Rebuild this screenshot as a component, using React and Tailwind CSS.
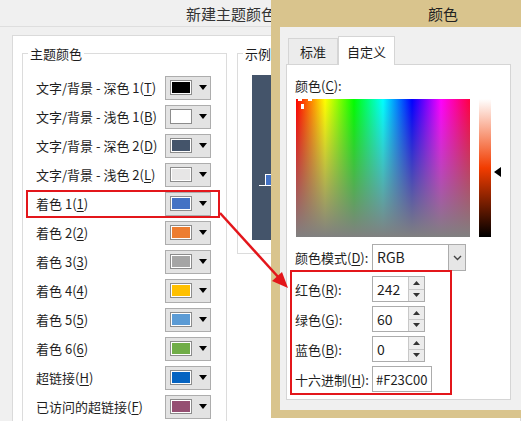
import React from 'react';

const themeRows = [
  { label: '文字/背景 - 深色 1(', key: 'T', color: '#000000' },
  { label: '文字/背景 - 浅色 1(', key: 'B', color: '#ffffff' },
  { label: '文字/背景 - 深色 2(', key: 'D', color: '#44546a' },
  { label: '文字/背景 - 浅色 2(', key: 'L', color: '#e7e6e6' },
  { label: '着色 1(', key: '1', color: '#4472c4' },
  { label: '着色 2(', key: '2', color: '#ed7d31' },
  { label: '着色 3(', key: '3', color: '#a5a5a5' },
  { label: '着色 4(', key: '4', color: '#ffc000' },
  { label: '着色 5(', key: '5', color: '#5b9bd5' },
  { label: '着色 6(', key: '6', color: '#70ad47' },
  { label: '超链接(', key: 'H', color: '#0563c1' },
  { label: '已访问的超链接(', key: 'F', color: '#954f72' },
];

const Accel = ({ text, k, tail = ')' }) => (
  <span>
    {text}
    <span className="underline underline-offset-2">{k}</span>
    {tail}
  </span>
);

const ColorButton = ({ color }) => (
  <div className="flex h-[24px] w-[46px] shrink-0 items-center border border-[#adadad] bg-[#e3e3e3]">
    <div className="ml-[4px] border border-[#8c8c8c] bg-white p-px">
      <div className="h-[11px] w-[18px]" style={{ backgroundColor: color }} />
    </div>
    <svg className="ml-[7px]" width="8" height="5" viewBox="0 0 8 5">
      <path d="M0 0h8L4 5z" fill="#000" />
    </svg>
  </div>
);

const Spinner = () => (
  <div className="flex h-full w-[16px] flex-col border-l border-[#c8c8c8]">
    <div className="flex flex-1 items-center justify-center border-b border-[#c8c8c8] bg-[#ececec]">
      <svg width="7" height="4" viewBox="0 0 7 4">
        <path d="M0 4h7L3.5 0z" fill="#333" />
      </svg>
    </div>
    <div className="flex flex-1 items-center justify-center bg-[#ececec]">
      <svg width="7" height="4" viewBox="0 0 7 4">
        <path d="M0 0h7L3.5 4z" fill="#333" />
      </svg>
    </div>
  </div>
);

const NumField = ({ label, k, value }) => (
  <div className="flex h-[26px] items-center">
    <div className="w-[77px]">
      <Accel text={label} k={k} tail="):" />
    </div>
    <div className="flex h-[26px] w-[53px] items-center border border-[#acacac] bg-white">
      <span className="flex-1 pl-[4px] text-[14px]">{value}</span>
      <Spinner />
    </div>
  </div>
);

export default function App() {
  return (
    <div className="relative h-[421px] w-[521px] overflow-hidden bg-[#f0f0f0] font-['Noto_Sans_CJK_SC',sans-serif] text-[13px] leading-[15px] text-[#1e1e1e]">
      {/* 新建主题颜色 对话框 */}
      <div className="flex h-full flex-col overflow-hidden">
        <div className="flex h-[27px] shrink-0 items-center border-b border-[#dedede] pl-[186px] text-[15px] text-[#333]">
          新建主题颜色
        </div>
        <div className="shrink-0 pl-[12px] pt-[8px]">
          <div className="flex h-[400px] gap-[10px] border border-[#dadada] bg-white pl-[9px] pt-[17px]">
            {/* 主题颜色 */}
            <div className="relative h-[380px] w-[205px] shrink-0 border border-[#dcdcdc] pt-[19px]">
              <span className="absolute -top-[8px] left-[5px] bg-white px-[2px]">主题颜色</span>
              {themeRows.map((r) => (
                <div key={r.key} className="flex h-[29px] items-center pl-[13px] pr-[15px]">
                  <div className="flex-1">
                    <Accel text={r.label} k={r.key} />
                  </div>
                  <ColorButton color={r.color} />
                </div>
              ))}
            </div>
            {/* 示例 */}
            <div className="relative h-[201px] w-[200px] shrink-0 border border-[#dcdcdc] pl-[14px] pt-[21px]">
              <span className="absolute -top-[8px] left-[5px] bg-white px-[2px]">示例</span>
              <div className="relative h-[165px] bg-[#44546a]">
                <svg className="absolute left-[7px] top-[98px]" width="20" height="14" viewBox="0 0 20 14">
                  <path d="M0 12.5h6" stroke="#fff" strokeWidth="1" />
                  <rect x="6.5" y="1.5" width="10" height="11" fill="#4472c4" stroke="#fff" strokeWidth="1" />
                </svg>
              </div>
            </div>
          </div>
        </div>
      </div>

      {/* 颜色 对话框 */}
      <div className="absolute left-[271px] top-0 flex h-[418px] w-[260px] flex-col bg-[#d9c48d]">
        <div className="flex h-[27px] shrink-0 items-center pl-[157px] text-[15px] text-[#222]">颜色</div>
        <div className="mb-[8px] ml-[9px] flex-1 bg-[#f0f0f0] px-[6px] pt-[9px]">
          <div className="flex h-[28px] items-end pl-[2px]">
            <div className="flex h-[26px] w-[50px] items-center justify-center border border-b-0 border-[#d5d5d5] bg-[#ececec]">
              标准
            </div>
            <div className="relative z-10 -mb-px flex h-[29px] w-[57px] items-center justify-center border border-b-0 border-[#d5d5d5] bg-white">
              自定义
            </div>
          </div>
          <div className="h-[336px] w-[225px] border border-[#d5d5d5] bg-white pl-[8px] pt-[13px]">
            <div>
              <Accel text="颜色(" k="C" tail="):" />
            </div>
            <div className="mt-[6px] flex">
              <svg className="ml-px" width="174" height="138" viewBox="0 0 174 138">
                <defs>
                  <linearGradient id="hue" x1="0" y1="0" x2="1" y2="0">
                    <stop offset="0" stopColor="#ff0000" />
                    <stop offset="0.167" stopColor="#ffff00" />
                    <stop offset="0.333" stopColor="#00ff00" />
                    <stop offset="0.5" stopColor="#00ffff" />
                    <stop offset="0.667" stopColor="#0000ff" />
                    <stop offset="0.833" stopColor="#ff00ff" />
                    <stop offset="1" stopColor="#ff0040" />
                  </linearGradient>
                  <linearGradient id="sat" x1="0" y1="0" x2="0" y2="1">
                    <stop offset="0" stopColor="#808080" stopOpacity="0" />
                    <stop offset="1" stopColor="#808080" stopOpacity="1" />
                  </linearGradient>
                </defs>
                <rect width="174" height="138" fill="url(#hue)" />
                <rect width="174" height="138" fill="url(#sat)" />
                <rect x="2" y="0" width="4" height="2" fill="#fff" />
                <rect x="12" y="0" width="4" height="2" fill="#fff" />
                <rect x="5" y="5" width="3" height="5" fill="#fff" />
              </svg>
              <svg className="ml-[9px]" width="12" height="138" viewBox="0 0 12 138">
                <defs>
                  <linearGradient id="lum" x1="0" y1="0" x2="0" y2="1">
                    <stop offset="0" stopColor="#ffffff" />
                    <stop offset="0.5" stopColor="#f23c00" />
                    <stop offset="1" stopColor="#000000" />
                  </linearGradient>
                </defs>
                <rect width="12" height="138" fill="url(#lum)" />
              </svg>
              <svg className="ml-[3px] mt-[68px]" width="7" height="10" viewBox="0 0 7 10">
                <path d="M7 0v10L0 5z" fill="#000" />
              </svg>
            </div>
            <div className="mt-[7px] flex items-center">
              <div className="w-[77px]">
                <Accel text="颜色模式(" k="D" tail="):" />
              </div>
              <div className="flex h-[27px] w-[94px] border border-[#acacac] bg-white">
                <span className="flex flex-1 items-center pl-[4px] text-[14px]">RGB</span>
                <div className="flex w-[17px] items-center justify-center border-l border-[#acacac] bg-[#e6e6e6]">
                  <svg width="9" height="6" viewBox="0 0 9 6">
                    <path d="M1 1l3.5 3.5L8 1" stroke="#444" strokeWidth="1.4" fill="none" />
                  </svg>
                </div>
              </div>
            </div>
            <div className="mt-[5px] flex flex-col gap-[4px]">
              <NumField label="红色(" k="R" value="242" />
              <NumField label="绿色(" k="G" value="60" />
              <NumField label="蓝色(" k="B" value="0" />
              <div className="flex h-[26px] items-center">
                <div className="w-[77px]">
                  <Accel text="十六进制(" k="H" tail="):" />
                </div>
                <div className="flex h-[26px] w-[60px] items-center overflow-hidden border border-[#acacac] bg-white pl-[3px] text-[13px]">
                  #F23C00
                </div>
              </div>
            </div>
          </div>
        </div>
      </div>

      {/* 标注框与箭头 */}
      <div className="absolute left-[26px] top-[190px] h-[28px] w-[194px] border-2 border-[#e3161b]" />
      <div className="absolute left-[290px] top-[270px] h-[125px] w-[162px] border-2 border-[#e3161b]" />
      <svg className="pointer-events-none absolute left-0 top-0" width="521" height="421" viewBox="0 0 521 421">
        <path d="M220 213L280 279" stroke="#e3161b" strokeWidth="2.5" />
        <path d="M288 288L272 281L282 272z" fill="#e3161b" />
      </svg>
    </div>
  );
}
